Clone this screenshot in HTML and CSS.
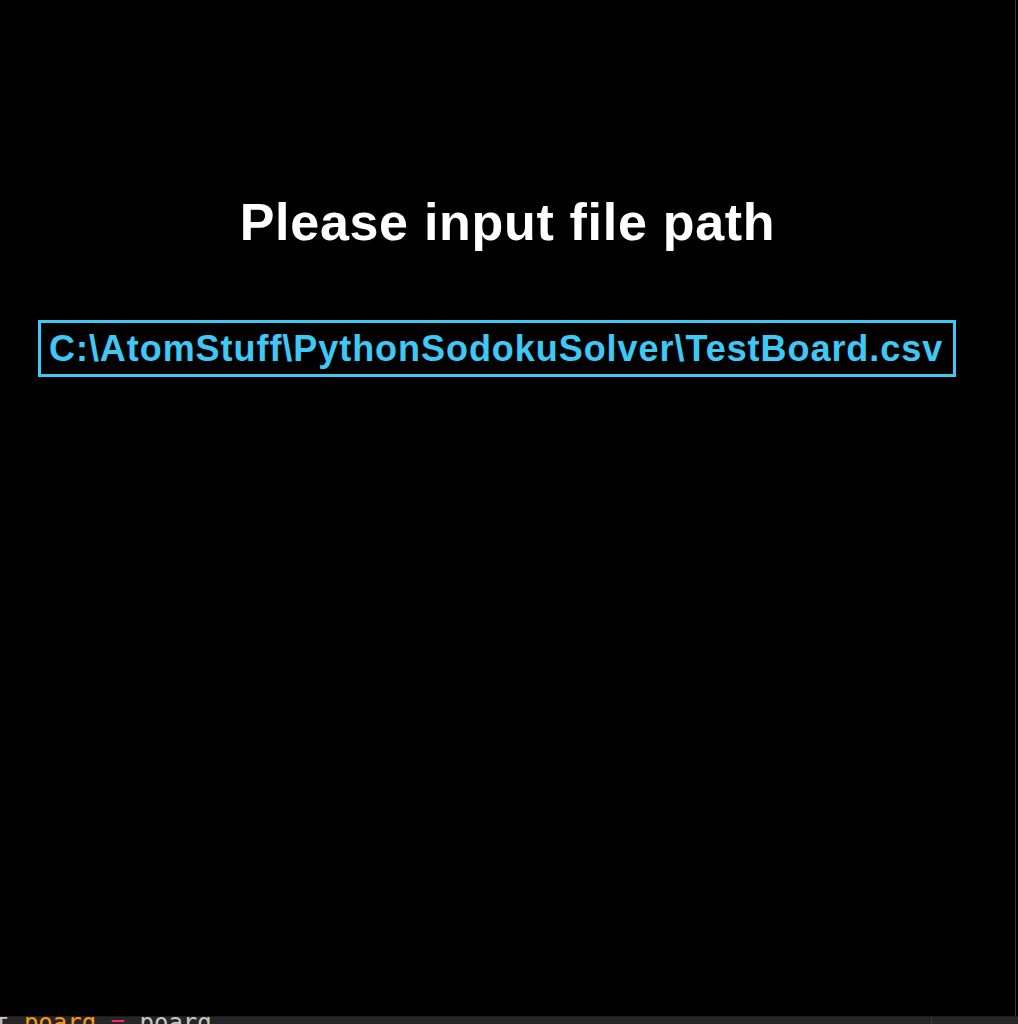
FILE: index.html
```html
<!DOCTYPE html>
<html lang="en">
<head>
<meta charset="utf-8">
<title>Sudoku Solver</title>
<link rel="stylesheet" href="styles.css">
</head>
<body>
<div class="screen">
  <main class="window">
    <h1 class="title">Please input file path</h1>
    <div class="input-box">C:\AtomStuff\PythonSodokuSolver\TestBoard.csv</div>
  </main>
  <div class="editor-strip">
    <div class="code"><span class="plain">t </span><span class="var">board</span><span class="plain"> </span><span class="op">=</span><span class="plain"> board</span></div>
    <div class="rest"></div>
  </div>
</div>
</body>
</html>
```

FILE: styles.css
```css
html, body {
  margin: 0;
  padding: 0;
  background: #000;
}

.screen {
  width: 1018px;
  height: 1024px;
  overflow: hidden;
  display: flex;
  flex-direction: column;
}

.window {
  width: 1016px;
  height: 1016px;
  flex: none;
  box-sizing: border-box;
  border-right: 1px solid #3a3a3a;
  background: #010101;
  padding-top: 196px;
  display: flex;
  flex-direction: column;
}

.title {
  margin: 0;
  font-family: "Liberation Sans", Arial, sans-serif;
  font-weight: bold;
  font-size: 52px;
  line-height: 52px;
  letter-spacing: 0.7px;
  color: #fff;
  text-align: center;
}

.input-box {
  margin: 72px 0 0 38px;
  width: 918px;
  height: 57px;
  box-sizing: border-box;
  border: 3px solid #3ec8f6;
  padding-left: 8px;
  font-family: "Liberation Sans", Arial, sans-serif;
  font-weight: bold;
  font-size: 36px;
  line-height: 51px;
  letter-spacing: 0.95px;
  color: #3ec8f6;
  white-space: nowrap;
}

.editor-strip {
  height: 8px;
  flex: none;
  display: flex;
  background: #262626;
  border-top: 1px solid #1c1c1c;
  overflow: hidden;
}

.code {
  width: 936px;
  flex: none;
  border-right: 1px solid #3c3c3c;
  font-family: "DejaVu Sans Mono", monospace;
  font-size: 24px;
  line-height: 24px;
  margin-top: -6px;
  margin-left: -5px;
  white-space: pre;
}

.plain { color: #c8c8c2; }
.var { color: #fd971f; }
.op { color: #f92672; }

.rest {
  flex: 1;
}
```
